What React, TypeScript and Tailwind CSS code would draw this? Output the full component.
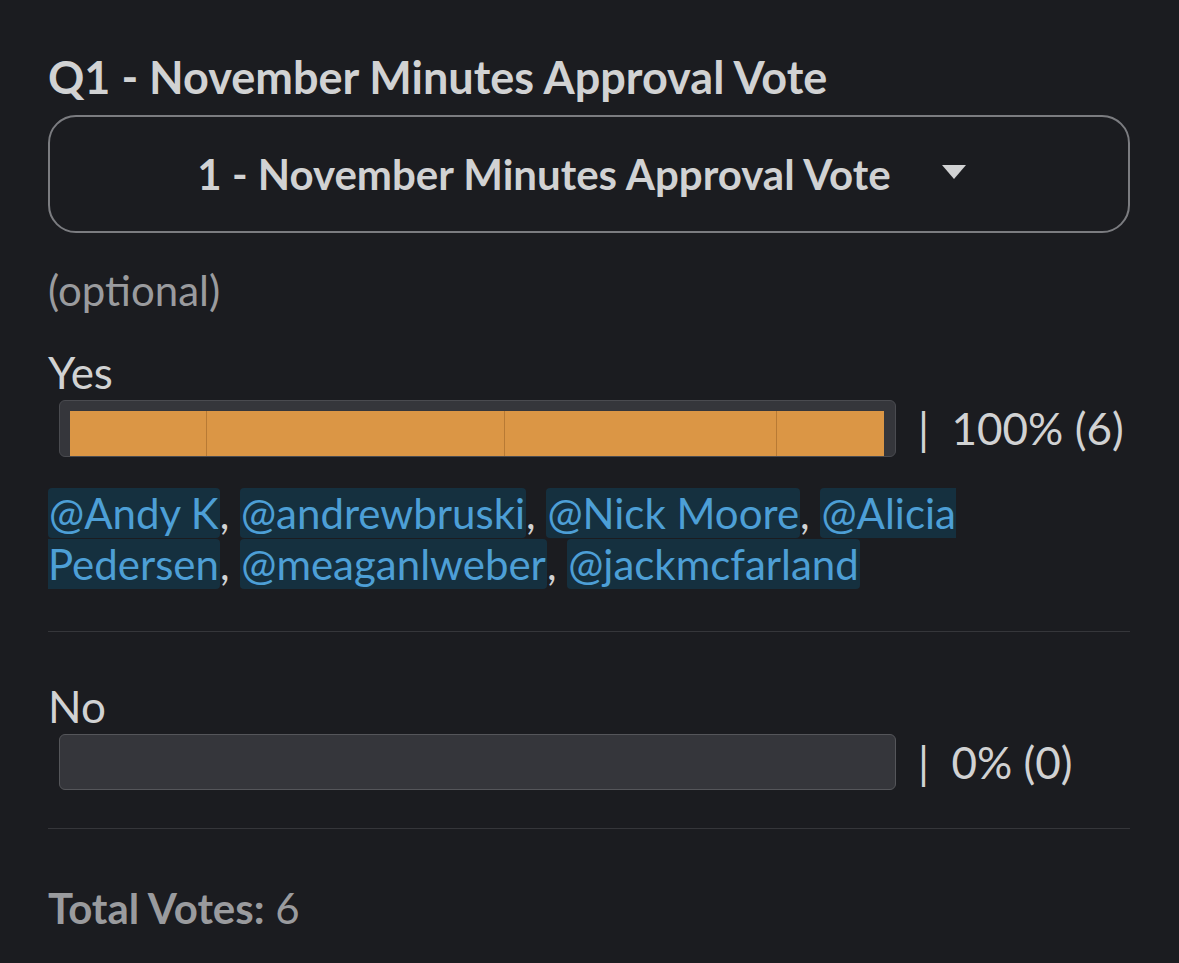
import React from "react";

function Mention({ children }: { children: React.ReactNode }) {
  return <span className="bg-[#15303f] text-[#4d9fd6] rounded-[4px] px-[1px]">{children}</span>;
}

export default function App() {
  return (
    <div
      className="w-[1179px] h-[963px] bg-[#1b1c20] text-[#d1d2d3] overflow-hidden"
      style={{ fontFamily: "Lato, 'Noto Sans', sans-serif" }}
    >
      <div className="pl-[48px] pr-[49px] pt-[52px]">
        <div className="text-[45px] font-bold leading-[50px] text-[#d1d2d3]">Q1 - November Minutes Approval Vote</div>
        <div className="mt-[13px] h-[118px] rounded-[28px] border-2 border-[#7b7c80] flex items-center justify-center gap-[50px] pr-[14px]">
          <span className="text-[42px] font-bold text-[#d1d2d3]">1 - November Minutes Approval Vote</span>
          <svg width="26" height="16" viewBox="0 0 26 16" className="mt-[-4px]">
            <path d="M1 1 H25 L13 15 Z" fill="#d1d2d3" />
          </svg>
        </div>
        <div className="mt-[35px] text-[42px] leading-[44px] text-[#9a9b9e]">(optional)</div>

        <div className="mt-[38px] text-[44px] leading-[45px]">Yes</div>
        <div className="flex items-center">
          <div className="ml-[11px] w-[837px] h-[57px] rounded-[6px] bg-[#35363b] border border-[#4a4b50] pt-[10px] pl-[10px] pr-[11px]">
            <div className="relative h-full w-full bg-[#db9645]">
              <div className="absolute top-0 bottom-0 left-[136px] w-px bg-[#b87a34]" />
              <div className="absolute top-0 bottom-0 left-[434px] w-px bg-[#b87a34]" />
              <div className="absolute top-0 bottom-0 left-[706px] w-px bg-[#b87a34]" />
            </div>
          </div>
          <div className="ml-[22px] text-[44px]">|&nbsp; 100% (6)</div>
        </div>

        <div className="mt-[27px] text-[42px] leading-[51px]">
          <Mention>@Andy K</Mention>, <Mention>@andrewbruski</Mention>, <Mention>@Nick Moore</Mention>,{" "}
          <Mention>@Alicia Pedersen</Mention>, <Mention>@meaganlweber</Mention>, <Mention>@jackmcfarland</Mention>
        </div>

        <div className="mt-[41px] h-px bg-[#35363a]" />

        <div className="mt-[52px] text-[44px] leading-[45px]">No</div>
        <div className="flex items-center">
          <div className="ml-[11px] w-[837px] h-[56px] rounded-[6px] bg-[#35363b] border border-[#55565a]" />
          <div className="ml-[22px] text-[44px]">|&nbsp; 0% (0)</div>
        </div>

        <div className="mt-[33px] h-px bg-[#35363a]" />

        <div className="mt-[57px] text-[42px] leading-[44px] text-[#9a9b9e]">
          <span className="font-bold">Total Votes:</span> 6
        </div>
      </div>
    </div>
  );
}
